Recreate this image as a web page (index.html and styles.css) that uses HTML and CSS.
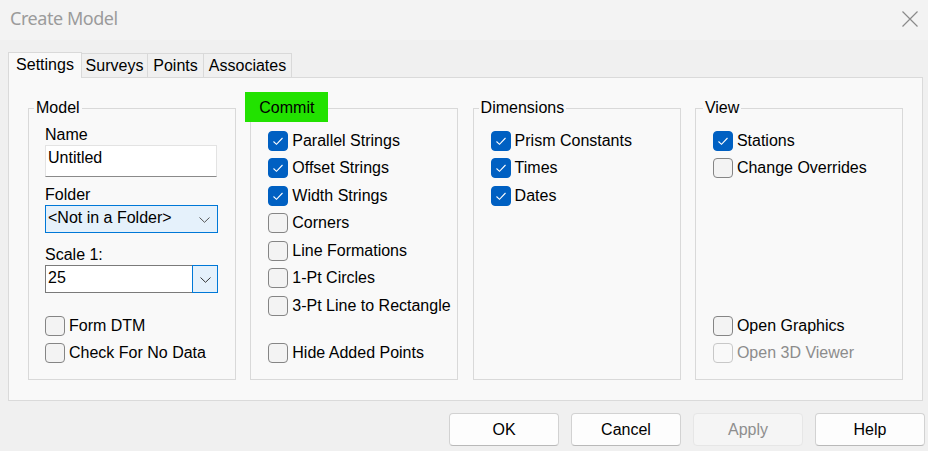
FILE: index.html
```html
<!DOCTYPE html>
<html>
<head>
<meta charset="utf-8">
<link rel="stylesheet" href="styles.css">
</head>
<body>
<div class="window">
  <div class="titlebar">
    <span class="title">Create Model</span>
    <svg class="close" width="16" height="16" viewBox="0 0 16 16"><path d="M0.5 0.5 L15.5 15.5 M15.5 0.5 L0.5 15.5" stroke="#8a8a8a" stroke-width="1.2" fill="none"/></svg>
  </div>
  <div class="tabs">
    <div class="tab active w-settings">Settings</div>
    <div class="tab w-surveys">Surveys</div>
    <div class="tab w-points">Points</div>
    <div class="tab w-assoc">Associates</div>
  </div>
  <div class="panel">
    <div class="group">
      <div class="legend">Model</div>
      <div class="field-label">Name</div>
      <div class="textbox">Untitled</div>
      <div class="field-label gap9">Folder</div>
      <div class="select"><span>&lt;Not in a Folder&gt;</span><svg class="chev" width="11" height="6" viewBox="0 0 11 6"><path d="M0.5 0.5 L5.5 5.3 L10.5 0.5" stroke="#555" stroke-width="1" fill="none"/></svg></div>
      <div class="field-label gap13">Scale 1:</div>
      <div class="combo"><span class="combo-text">25</span><span class="combo-btn"><svg width="11" height="6" viewBox="0 0 11 6"><path d="M0.5 0.5 L5.5 5.3 L10.5 0.5" stroke="#333" stroke-width="1" fill="none"/></svg></span></div>
      <div class="bottom">
        <div class="check"><span class="box"></span>Form DTM</div>
        <div class="check"><span class="box"></span>Check For No Data</div>
      </div>
    </div>
    <div class="group checks">
      <div class="legend commit">Commit</div>
      <div class="check"><span class="box on"><svg width="20" height="20" viewBox="0 0 20 20"><path d="M5.5 10.5 L8.5 13.3 L14.5 7" stroke="#fff" stroke-width="1.1" fill="none"/></svg></span>Parallel Strings</div>
      <div class="check"><span class="box on"><svg width="20" height="20" viewBox="0 0 20 20"><path d="M5.5 10.5 L8.5 13.3 L14.5 7" stroke="#fff" stroke-width="1.1" fill="none"/></svg></span>Offset Strings</div>
      <div class="check"><span class="box on"><svg width="20" height="20" viewBox="0 0 20 20"><path d="M5.5 10.5 L8.5 13.3 L14.5 7" stroke="#fff" stroke-width="1.1" fill="none"/></svg></span>Width Strings</div>
      <div class="check"><span class="box"></span>Corners</div>
      <div class="check"><span class="box"></span>Line Formations</div>
      <div class="check"><span class="box"></span>1-Pt Circles</div>
      <div class="check"><span class="box"></span>3-Pt Line to Rectangle</div>
      <div class="bottom">
        <div class="check"><span class="box"></span>Hide Added Points</div>
      </div>
    </div>
    <div class="group checks">
      <div class="legend">Dimensions</div>
      <div class="check"><span class="box on"><svg width="20" height="20" viewBox="0 0 20 20"><path d="M5.5 10.5 L8.5 13.3 L14.5 7" stroke="#fff" stroke-width="1.1" fill="none"/></svg></span>Prism Constants</div>
      <div class="check"><span class="box on"><svg width="20" height="20" viewBox="0 0 20 20"><path d="M5.5 10.5 L8.5 13.3 L14.5 7" stroke="#fff" stroke-width="1.1" fill="none"/></svg></span>Times</div>
      <div class="check"><span class="box on"><svg width="20" height="20" viewBox="0 0 20 20"><path d="M5.5 10.5 L8.5 13.3 L14.5 7" stroke="#fff" stroke-width="1.1" fill="none"/></svg></span>Dates</div>
    </div>
    <div class="group checks">
      <div class="legend view">View</div>
      <div class="check"><span class="box on"><svg width="20" height="20" viewBox="0 0 20 20"><path d="M5.5 10.5 L8.5 13.3 L14.5 7" stroke="#fff" stroke-width="1.1" fill="none"/></svg></span>Stations</div>
      <div class="check"><span class="box"></span>Change Overrides</div>
      <div class="bottom">
        <div class="check"><span class="box"></span>Open Graphics</div>
        <div class="check disabled"><span class="box"></span>Open 3D Viewer</div>
      </div>
    </div>
  </div>
  <div class="buttons">
    <div class="btn">OK</div>
    <div class="btn">Cancel</div>
    <div class="btn disabled">Apply</div>
    <div class="btn">Help</div>
  </div>
</div>
</body>
</html>
```
FILE: styles.css
```css
html, body {
  margin: 0;
  padding: 0;
}
body {
  background: #f0f0f0;
  font-family: "Liberation Sans", Arial, sans-serif;
  font-size: 16px;
  line-height: 18px;
  color: #000;
  width: 928px;
  height: 451px;
  overflow: hidden;
}
.window {
  display: flex;
  flex-direction: column;
}
.titlebar {
  height: 40px;
  background: #f3f3f3;
  display: flex;
  align-items: flex-start;
  justify-content: space-between;
  box-sizing: border-box;
}
.title {
  font-family: "Noto Sans", sans-serif;
  font-size: 18px;
  line-height: 24px;
  letter-spacing: -0.45px;
  color: #9b9b9b;
  margin-top: 6px;
  margin-left: 10px;
}
.close {
  margin-top: 11px;
  margin-right: 10px;
}
.tabs {
  display: flex;
  align-items: flex-end;
  margin-top: 12px;
  margin-left: 8px;
  position: relative;
  z-index: 1;
}
.tab {
  box-sizing: border-box;
  height: 24px;
  border: 1px solid #d9d9d9;
  border-bottom: none;
  background: #f0f0f0;
  text-align: center;
  padding-top: 3px;
  margin-left: -1px;
}
.tab.active {
  height: 26px;
  margin-bottom: -1px;
  background: #f9f9f9;
  padding-top: 3px;
  margin-left: 0;
  position: relative;
  z-index: 2;
}
.w-settings { width: 74px; }
.w-surveys { width: 67px; }
.w-points { width: 57px; }
.w-assoc { width: 89px; }
.panel {
  box-sizing: border-box;
  margin-left: 8px;
  width: 915px;
  height: 324px;
  border: 1px solid #dadada;
  background: #f9f9f9;
  padding: 30px 0 0 19px;
  display: grid;
  grid-template-columns: repeat(4, 208px);
  grid-template-rows: 272px;
  column-gap: 14.3px;
}
.group {
  box-sizing: border-box;
  position: relative;
  border: 1px solid #d9d9d9;
  padding: 17px 16px 12px 16px;
  display: flex;
  flex-direction: column;
}
.group.checks {
  padding-top: 18px;
  padding-left: 17px;
}
.legend {
  position: absolute;
  top: -10px;
  left: 5px;
  padding: 0 2px;
  background: #f9f9f9;
  line-height: 18px;
}
.legend.view {
  left: 7px;
}
.legend.commit {
  top: -17px;
  left: -6px;
  padding: 7px 14px 5px 14px;
  background: #22e200;
}
.field-label {
  line-height: 18px;
}
.gap9 { margin-top: 9px; }
.gap13 { margin-top: 13px; }
.textbox {
  box-sizing: border-box;
  margin-top: 1px;
  width: 172px;
  height: 32px;
  background: #fff;
  border: 1px solid #e3e3e3;
  border-bottom-color: #8a8a8a;
  padding: 3px 2px 0;
}
.select {
  box-sizing: border-box;
  margin-top: 1px;
  width: 173px;
  height: 28px;
  background: #e5f1fb;
  border: 1px solid #0078d7;
  padding: 3px 7px 0 2px;
  display: flex;
  justify-content: space-between;
  align-items: flex-start;
}
.chev {
  margin-top: 8px;
}
.combo {
  box-sizing: border-box;
  margin-top: 1px;
  width: 173px;
  height: 28px;
  display: flex;
  background: #fff;
}
.combo-text {
  flex: 1;
  border: 1px solid #7a7a7a;
  border-right: none;
  padding: 3px 2px 0;
}
.combo-btn {
  box-sizing: border-box;
  width: 26px;
  height: 28px;
  background: #e5f1fb;
  border: 1px solid #0078d7;
  display: flex;
  justify-content: center;
  padding-top: 11px;
}
.bottom {
  margin-top: auto;
  display: flex;
  flex-direction: column;
}
.check {
  height: 27.5px;
  display: flex;
  align-items: center;
  gap: 4px;
  white-space: nowrap;
}
.box {
  box-sizing: border-box;
  width: 20px;
  height: 20px;
  flex: none;
  border: 1px solid #858585;
  border-radius: 4px;
  background: #f3f3f3;
  position: relative;
}
.box svg {
  display: block;
  margin: -1px;
}
.box.on {
  background: #0060c2;
  border-color: #0060c2;
}
.check.disabled {
  color: #8c8c8c;
}
.check.disabled .box {
  border-color: #c8c8c8;
  background: #f9f9f9;
}
.buttons {
  display: flex;
  justify-content: flex-end;
  gap: 12px;
  margin-top: 12px;
  padding-right: 3px;
}
.btn {
  box-sizing: border-box;
  width: 110px;
  height: 33px;
  border: 1px solid #d2d2d2;
  border-bottom-color: #b9b9b9;
  border-radius: 4px;
  background: #fdfdfd;
  text-align: center;
  padding-top: 7px;
}
.btn.disabled {
  background: #f5f5f5;
  border-color: #e6e6e6;
  color: #8e8e8e;
}
```
